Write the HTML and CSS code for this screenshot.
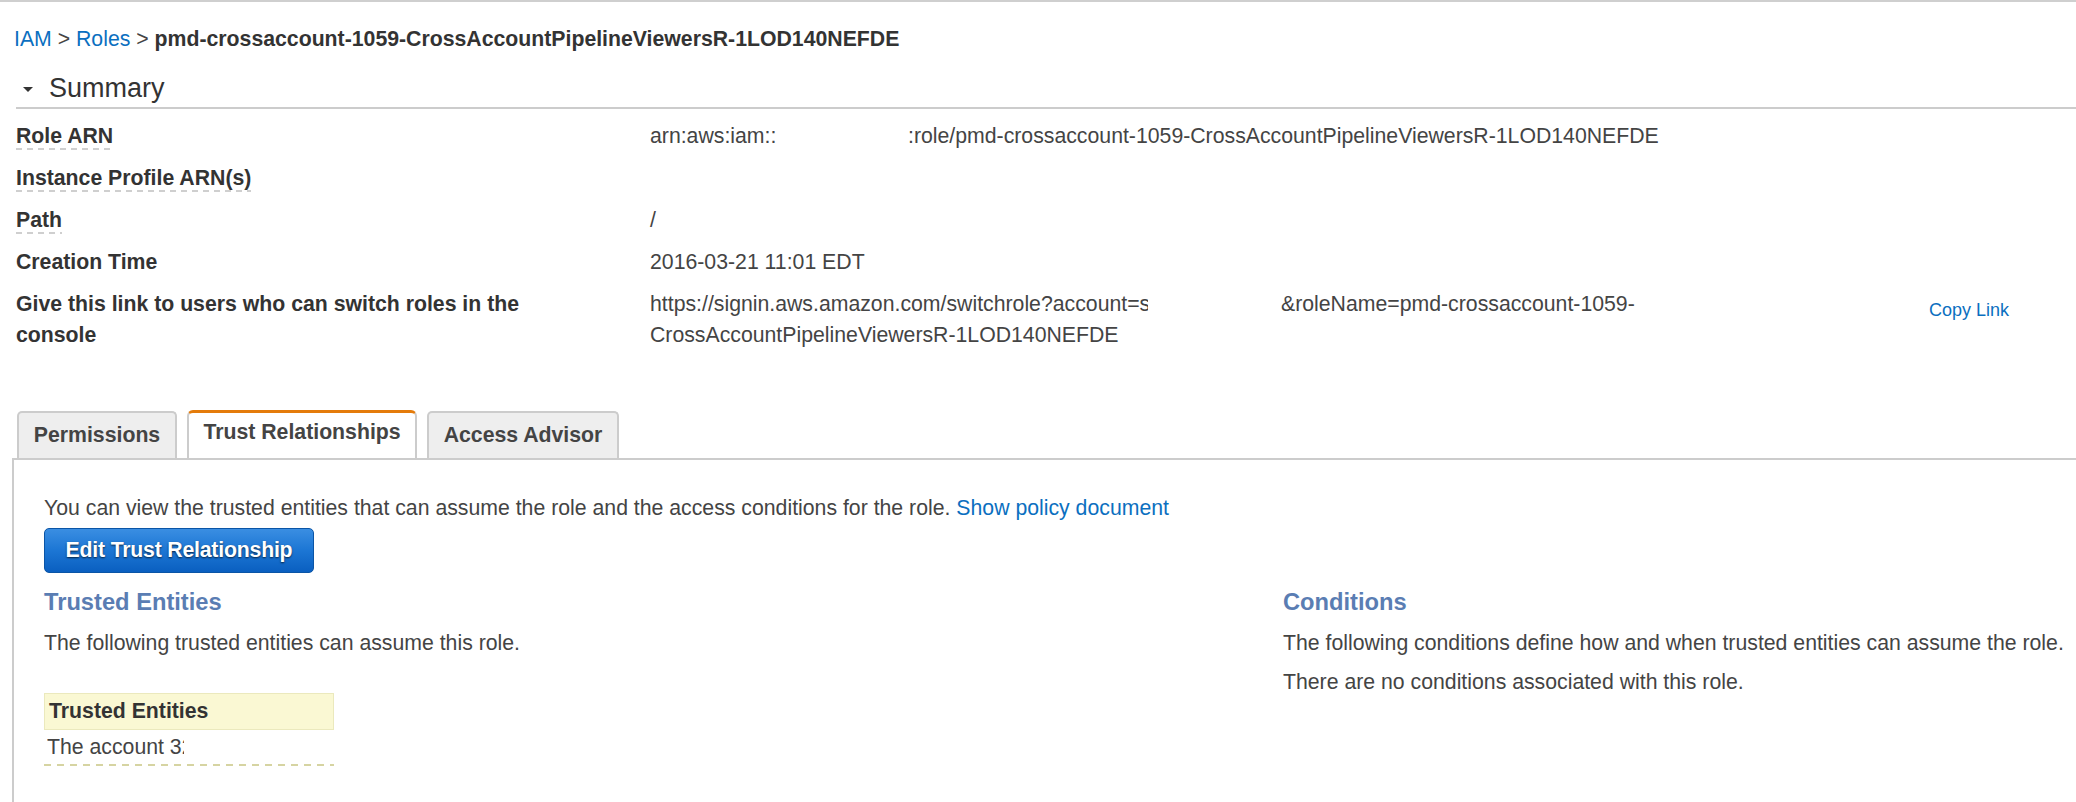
FILE: index.html
```html
<!DOCTYPE html>
<html>
<head>
<meta charset="utf-8">
<title>IAM Role</title>
<link rel="stylesheet" href="styles.css">
</head>
<body>
<div class="topbar"></div>
<div class="breadcrumb"><a class="link">IAM</a> &gt; <a class="link">Roles</a> &gt; <b>pmd-crossaccount-1059-CrossAccountPipelineViewersR-1LOD140NEFDE</b></div>

<div class="summary-head">
  <span class="caret"></span>
  <span class="summary-title">Summary</span>
</div>

<div class="details">
  <div class="row">
    <div class="label"><span class="term">Role ARN</span></div>
    <div class="value"><span class="arn-head">arn:aws:iam::</span>:role/pmd-crossaccount-1059-CrossAccountPipelineViewersR-1LOD140NEFDE</div>
  </div>
  <div class="row">
    <div class="label"><span class="term">Instance Profile ARN(s)</span></div>
    <div class="value"></div>
  </div>
  <div class="row">
    <div class="label"><span class="term">Path</span></div>
    <div class="value">/</div>
  </div>
  <div class="row">
    <div class="label">Creation Time</div>
    <div class="value">2016-03-21 11:01 EDT</div>
  </div>
  <div class="row row-link">
    <div class="label">Give this link to users who can switch roles in the console</div>
    <div class="value"><span class="url-head"><span class="url-clip">https://signin.aws.amazon.com/switchrole?account=s</span></span>&amp;roleName=pmd-crossaccount-1059-<br>CrossAccountPipelineViewersR-1LOD140NEFDE</div>
    <div class="copy"><a class="link">Copy Link</a></div>
  </div>
</div>

<div class="tabs">
  <div class="tab tab-perm">Permissions</div>
  <div class="tab tab-active">Trust Relationships</div>
  <div class="tab tab-access">Access Advisor</div>
</div>

<div class="panel">
  <p class="intro">You can view the trusted entities that can assume the role and the access conditions for the role. <a class="link">Show policy document</a></p>
  <button class="btn">Edit Trust Relationship</button>
  <div class="cols">
    <div class="col">
      <h3 class="col-title">Trusted Entities</h3>
      <p class="para">The following trusted entities can assume this role.</p>
      <div class="entities">
        <div class="ent-head">Trusted Entities</div>
        <div class="ent-row"><span class="ent-clip">The account 32</span></div>
      </div>
    </div>
    <div class="col">
      <h3 class="col-title">Conditions</h3>
      <p class="para">The following conditions define how and when trusted entities can assume the role.</p>
      <p class="para">There are no conditions associated with this role.</p>
    </div>
  </div>
</div>
</body>
</html>
```

FILE: styles.css
```css
html, body {
  margin: 0;
  padding: 0;
  overflow: hidden;
  background: #fff;
}
body {
  font-family: "Liberation Sans", Arial, Helvetica, sans-serif;
  font-size: 21.25px;
  color: #444;
  width: 2076px;
  height: 802px;
}
.link {
  color: #0b6fc0;
  text-decoration: none;
  cursor: pointer;
}
.topbar {
  height: 2px;
  background: #cfcfcf;
}
.breadcrumb {
  margin-top: 24.5px;
  padding-left: 14px;
  line-height: 24px;
  color: #444;
}
.breadcrumb b {
  color: #333;
}
.summary-head {
  margin: 21px 0 0 16px;
  padding-bottom: 3.5px;
  border-bottom: 2px solid #cccccc;
  display: flex;
  align-items: center;
  line-height: 32px;
}
.caret {
  width: 0;
  height: 0;
  border-left: 5.5px solid transparent;
  border-right: 5.5px solid transparent;
  border-top: 5.5px solid #333;
  margin-left: 7px;
  margin-right: 16px;
  margin-top: 3px;
}
.summary-title {
  font-size: 27px;
  color: #333;
}
.details {
  margin: 6px 0 0 16px;
}
.row {
  display: grid;
  grid-template-columns: 634px 1fr;
  padding: 4px 0;
  line-height: 34px;
  min-height: 34px;
}
.row-link {
  grid-template-columns: 634px 1279px auto;
  line-height: 31px;
  padding: 6px 0 4px 0;
}
.label {
  font-weight: bold;
  color: #333;
  max-width: 540px;
}
.term {
  padding-bottom: 2px;
  background-image: linear-gradient(to right, #cfcfcf 55%, transparent 55%);
  background-size: 11px 2px;
  background-repeat: repeat-x;
  background-position: left bottom;
}
.value {
  color: #444;
  white-space: nowrap;
}
.arn-head {
  display: inline-block;
  width: 258px;
}
.url-head {
  display: inline-block;
  width: 631px;
  vertical-align: top;
}
.url-clip {
  display: inline-block;
  max-width: 498px;
  overflow: hidden;
  white-space: nowrap;
  vertical-align: top;
}
.copy {
  font-size: 18px;
  margin-top: 5.5px;
}
.tabs {
  margin: 55px 0 0 17px;
  display: flex;
  align-items: flex-end;
  gap: 10px;
}
.tab {
  box-sizing: border-box;
  height: 47px;
  border: 2px solid #cccccc;
  border-bottom: none;
  border-radius: 5px 5px 0 0;
  background: #eeeeee;
  font-weight: bold;
  color: #444;
  text-align: center;
  line-height: 24px;
  padding-top: 9.5px;
}
.tab-perm { width: 160px; }
.tab-access { width: 192px; }
.tab-active {
  width: 230px;
  height: 48px;
  background: #fff;
  border-top: 3px solid #e47b0a;
  padding-top: 7px;
  border-radius: 6px 6px 0 0;
}
.panel {
  margin-left: 12px;
  margin-right: -20px;
  border-top: 2px solid #cccccc;
  border-left: 2px solid #cccccc;
  padding: 36px 0 40px 30px;
}
.intro {
  margin: 0;
  line-height: 24px;
  color: #444;
}
.btn {
  display: block;
  margin-top: 8px;
  width: 270px;
  height: 45px;
  box-sizing: border-box;
  border: 1px solid #0b55a6;
  border-radius: 5px;
  background: linear-gradient(to bottom, #3a8ee2 0%, #1c76d4 50%, #0a5fc0 100%);
  color: #fff;
  font-family: "Liberation Sans", Arial, Helvetica, sans-serif;
  font-size: 21.25px;
  font-weight: bold;
  text-shadow: 0 1px 2px rgba(0, 0, 0, 0.7);
  padding: 0;
  letter-spacing: -0.2px;
}
.cols {
  display: grid;
  grid-template-columns: 1239px 1fr;
  margin-top: 15px;
}
.col-title {
  margin: 0;
  font-size: 23.7px;
  line-height: 28px;
  font-weight: bold;
  color: #5a7db3;
}
.para {
  margin: 15px 0 0 0;
  line-height: 24px;
  color: #444;
  white-space: nowrap;
}
.entities {
  margin-top: 38px;
  width: 290px;
}
.ent-head {
  background: #faf8d3;
  border: 1px solid #ebe9bd;
  padding: 5px 4px 6px 4px;
  line-height: 24px;
  font-weight: bold;
  color: #333;
}
.ent-row {
  padding: 5px 3px 7px 3px;
  line-height: 24px;
  background-image: linear-gradient(to right, #d6d4a2 55%, transparent 55%);
  background-size: 13px 2px;
  background-repeat: repeat-x;
  background-position: left bottom;
}
.ent-clip {
  display: inline-block;
  width: 137px;
  overflow: hidden;
  white-space: nowrap;
  vertical-align: top;
}
```
